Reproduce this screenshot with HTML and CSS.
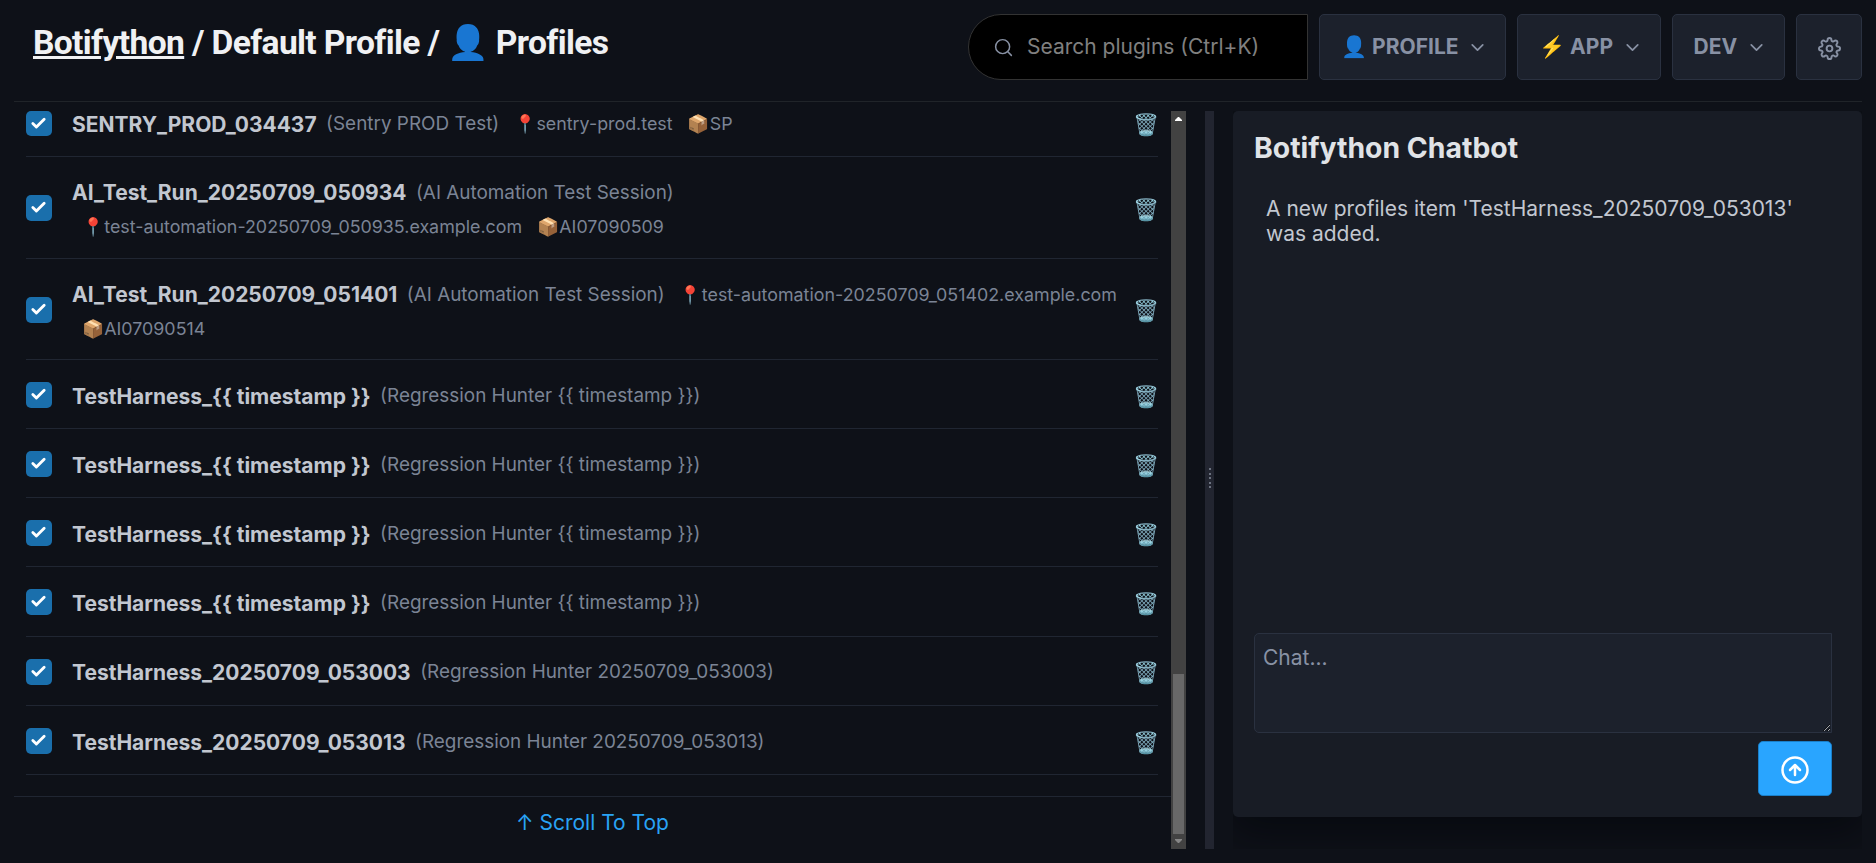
FILE: index.html
```html
<!DOCTYPE html>
<html lang="en">
<head>
<meta charset="utf-8">
<title>Botifython - Profiles</title>
<link rel="stylesheet" href="styles.css">
</head>
<body>
<header class="topbar">
  <h1 class="crumbs"><a class="home">Botifython</a> / Default Profile / 👤 Profiles</h1>
  <nav class="menu">
    <div class="search">
      <svg class="search-icon" viewBox="0 0 24 24"><circle cx="11" cy="11" r="8"/><path d="M21 21l-4.35-4.35"/></svg>
      <span>Search plugins (Ctrl+K)</span>
    </div>
    <div class="btn profile"><span>👤 PROFILE</span><svg class="chev" viewBox="0 0 24 24"><path d="M6 9l6 6 6-6"/></svg></div>
    <div class="btn app"><span>⚡ APP</span><svg class="chev" viewBox="0 0 24 24"><path d="M6 9l6 6 6-6"/></svg></div>
    <div class="btn dev"><span>DEV</span><svg class="chev" viewBox="0 0 24 24"><path d="M6 9l6 6 6-6"/></svg></div>
    <div class="btn gear">
      <svg class="gear-icon" viewBox="0 0 24 24"><circle cx="12" cy="12" r="3"/><path d="M19.4 15a1.65 1.65 0 0 0 .33 1.82l.06.06a2 2 0 0 1 0 2.83 2 2 0 0 1-2.83 0l-.06-.06a1.65 1.65 0 0 0-1.82-.33 1.65 1.65 0 0 0-1 1.51V21a2 2 0 0 1-2 2 2 2 0 0 1-2-2v-.09A1.65 1.65 0 0 0 9 19.4a1.65 1.65 0 0 0-1.82.33l-.06.06a2 2 0 0 1-2.83 0 2 2 0 0 1 0-2.83l.06-.06a1.65 1.65 0 0 0 .33-1.82 1.65 1.65 0 0 0-1.51-1H3a2 2 0 0 1-2-2 2 2 0 0 1 2-2h.09A1.65 1.65 0 0 0 4.6 9a1.65 1.65 0 0 0-.33-1.82l-.06-.06a2 2 0 0 1 0-2.83 2 2 0 0 1 2.83 0l.06.06a1.65 1.65 0 0 0 1.82.33H9a1.65 1.65 0 0 0 1-1.51V3a2 2 0 0 1 2-2 2 2 0 0 1 2 2v.09a1.65 1.65 0 0 0 1 1.51 1.65 1.65 0 0 0 1.82-.33l.06-.06a2 2 0 0 1 2.83 0 2 2 0 0 1 0 2.83l-.06.06a1.65 1.65 0 0 0-.33 1.82V9a1.65 1.65 0 0 0 1.51 1H21a2 2 0 0 1 2 2 2 2 0 0 1-2 2h-.09a1.65 1.65 0 0 0-1.51 1z"/></svg>
    </div>
  </nav>
</header>
<main class="content">
  <section class="left">
    <ul class="list">
      <li class="row first"><span class="check"><svg viewBox="0 0 24 24"><path d="M20 6L9 17l-5-5"/></svg></span><div class="info"><b>SENTRY_PROD_034437</b><span class="real">(Sentry PROD Test)</span><span class="tag">📍sentry-prod.test</span><span class="tag">📦SP</span></div><span class="trash">🗑️</span></li>
      <li class="row tall"><span class="check"><svg viewBox="0 0 24 24"><path d="M20 6L9 17l-5-5"/></svg></span><div class="info"><b>AI_Test_Run_20250709_050934</b><span class="real">(AI Automation Test Session)</span><br><span class="tag lead">📍test-automation-20250709_050935.example.com</span><span class="tag">📦AI07090509</span></div><span class="trash">🗑️</span></li>
      <li class="row tall"><span class="check"><svg viewBox="0 0 24 24"><path d="M20 6L9 17l-5-5"/></svg></span><div class="info"><b>AI_Test_Run_20250709_051401</b><span class="real">(AI Automation Test Session)</span><span class="tag">📍test-automation-20250709_051402.example.com</span><br><span class="tag lead">📦AI07090514</span></div><span class="trash">🗑️</span></li>
      <li class="row"><span class="check"><svg viewBox="0 0 24 24"><path d="M20 6L9 17l-5-5"/></svg></span><div class="info"><b>TestHarness_{{ timestamp }}</b><span class="real">(Regression Hunter {{ timestamp }})</span></div><span class="trash">🗑️</span></li>
      <li class="row"><span class="check"><svg viewBox="0 0 24 24"><path d="M20 6L9 17l-5-5"/></svg></span><div class="info"><b>TestHarness_{{ timestamp }}</b><span class="real">(Regression Hunter {{ timestamp }})</span></div><span class="trash">🗑️</span></li>
      <li class="row"><span class="check"><svg viewBox="0 0 24 24"><path d="M20 6L9 17l-5-5"/></svg></span><div class="info"><b>TestHarness_{{ timestamp }}</b><span class="real">(Regression Hunter {{ timestamp }})</span></div><span class="trash">🗑️</span></li>
      <li class="row"><span class="check"><svg viewBox="0 0 24 24"><path d="M20 6L9 17l-5-5"/></svg></span><div class="info"><b>TestHarness_{{ timestamp }}</b><span class="real">(Regression Hunter {{ timestamp }})</span></div><span class="trash">🗑️</span></li>
      <li class="row"><span class="check"><svg viewBox="0 0 24 24"><path d="M20 6L9 17l-5-5"/></svg></span><div class="info"><b>TestHarness_20250709_053003</b><span class="real">(Regression Hunter 20250709_053003)</span></div><span class="trash">🗑️</span></li>
      <li class="row"><span class="check"><svg viewBox="0 0 24 24"><path d="M20 6L9 17l-5-5"/></svg></span><div class="info"><b>TestHarness_20250709_053013</b><span class="real">(Regression Hunter 20250709_053013)</span></div><span class="trash">🗑️</span></li>
    </ul>
    <footer class="to-top"><a>↑ Scroll To Top</a></footer>
  </section>
  <div class="scrollbar">
    <svg class="up" viewBox="0 0 7 4"><path d="M3 0h1l3 3v1H0V3z"/></svg>
    <div class="thumb"></div>
    <svg class="down" viewBox="0 0 7 4"><path d="M0 0h7v1L4 4H3L0 1z"/></svg>
  </div>
  <div class="divider"><i></i><i></i><i></i><i></i><i></i></div>
  <aside class="chat-wrap">
    <div class="chat">
      <h2 class="chat-title">Botifython Chatbot</h2>
      <p class="message">A new profiles item 'TestHarness_20250709_053013' was added.</p>
      <textarea class="chat-input" placeholder="Chat..."></textarea>
      <div class="send"><svg viewBox="0 0 24 24"><circle cx="12" cy="12" r="10"/><path d="M16 12l-4-4-4 4M12 16V8"/></svg></div>
    </div>
  </aside>
</main>
</body>
</html>
```
FILE: styles.css
```css
* { box-sizing: border-box; }
body {
  margin: 0;
  width: 1876px;
  height: 863px;
  overflow: hidden;
  padding: 14px 14px 0;
  background: #0e1118;
  color: #c2c7d0;
  font: 21px/31.5px Inter, "Noto Color Emoji", sans-serif;
}
h1, h2, p, ul { margin: 0; padding: 0; }

.topbar {
  display: flex;
  justify-content: space-between;
  height: 88px;
  border-bottom: 1px solid #202429;
}
.crumbs {
  padding: 9px 0 0 19px;
  font-family: Roboto, "Noto Color Emoji", sans-serif;
  font-size: 33.6px;
  letter-spacing: -0.63px;
  line-height: 40px;
  font-weight: 700;
  color: #f0f1f3;
  white-space: nowrap;
}
.home { text-decoration: underline; }
.menu { display: flex; gap: 11px; height: 66px; }
.search {
  display: flex;
  align-items: center;
  width: 340px;
  padding-left: 24px;
  gap: 13px;
  border: 1px solid #333;
  border-radius: 33px 0 0 33px;
  background: #000;
  color: #808080;
}
.search-icon { width: 21px; height: 21px; fill: none; stroke: #8891a4; stroke-width: 1.7; stroke-linecap: round; }
.btn {
  display: flex;
  align-items: center;
  border: 1px solid #2a3140;
  border-radius: 5px;
  background: #1c212c;
  color: #8891a4;
  font-weight: 700;
  padding-left: 21px;
  justify-content: space-between;
  padding-right: 17px;
}
.profile { width: 187px; }
.app { width: 144px; }
.dev { width: 113px; padding-left: 20.5px; }
.gear { width: 66px; padding: 0; justify-content: center; }
.chev { width: 21px; height: 21px; fill: none; stroke: #8891a4; stroke-width: 2; stroke-linecap: round; stroke-linejoin: round; }
.gear-icon { width: 23px; height: 23px; margin-top: 2px; fill: none; stroke: #8891a4; stroke-width: 2; }

.content { display: flex; height: 738px; margin-top: 9px; }
.left { width: 1157px; display: flex; flex-direction: column; }
.list { list-style: none; padding: 0 13px 0 12px; }
.row {
  display: flex;
  align-items: center;
  height: 69.17px;
  padding-top: 2px;
  border-bottom: 1px solid #202632;
}
.row.first { height: 46.3px; padding-top: 0; align-items: flex-start; }
.row.first .check { height: 25px; }
.row.first .info { margin-top: -3px; padding-top: 0; }
.row.first .trash { margin: -5px 0 0; }
.row.tall { height: 101.3px; }
.row.tall .info { padding-top: 4px; line-height: 34px; }
.check {
  width: 26px;
  height: 26px;
  margin-right: 20px;
  border-radius: 5px;
  background: #1a6fac;
  display: flex;
  align-items: center;
  justify-content: center;
}
.check svg { width: 17px; height: 17px; margin: 0 1px 1px 0; fill: none; stroke: #fff; stroke-width: 4; stroke-linecap: round; stroke-linejoin: round; }
.info { flex: 1; padding-top: 3px; white-space: nowrap; line-height: 33.5px; }
.info b { font-weight: 700; color: #c2c7d0; }
.real, .tag { line-height: 1; vertical-align: 2px; color: #7b8495; }
.tall .real, .tall .tag { vertical-align: 1px; }
.real { margin-left: 9.5px; font-size: 18.9px; }
.tag { margin-left: 15px; font-size: 17.85px; }
.tag.lead { margin-left: 10px; }
.trash { width: 23px; padding-top: 3px; font-size: 21px; display: flex; justify-content: center; }

.to-top {
  margin-top: 21px;
  padding-top: 10px;
  border-top: 1px solid #202632;
  text-align: center;
  color: #29a3f5;
}

.scrollbar {
  width: 15px;
  background: #424242;
  display: flex;
  flex-direction: column;
  align-items: center;
  padding: 6px 0;
}
.up, .down { width: 7px; height: 4px; }
.up { fill: #fff; }
.down { fill: #868686; margin-top: 5px; }
.thumb { width: 11px; height: 160px; margin-top: 553px; background: #686868; }

.divider {
  width: 9px;
  margin-left: 19px;
  padding-bottom: 4px;
  background: #222530;
  display: flex;
  flex-direction: column;
  align-items: center;
  justify-content: center;
  gap: 2.5px;
}
.divider i { width: 2px; height: 2px; background: #6c7280; }

.chat-wrap { width: 629px; margin-left: 19px; overflow: hidden; }
.chat {
  height: 706px;
  padding: 20px 30px 0 21px;
  border-radius: 5px;
  background: #181c25;
  box-shadow: 0 12px 40px rgba(2, 4, 8, .6);
  display: flex;
  flex-direction: column;
}
.chat-title { font-size: 28.35px; line-height: 34px; font-weight: 700; color: #e0e3e7; }
.message { margin-top: 31px; padding: 0 12px; line-height: 25.2px; width: 565px; }
.chat-input {
  margin-top: auto;
  height: 100px;
  border: 1px solid #2a3140;
  border-radius: 5px 0 0 5px;
  background: #1c212c;
  padding: 8px;
  font: inherit;
  resize: vertical;
  outline: 0;
}
.chat-input::placeholder { color: #8891a4; opacity: 1; }
.send {
  width: 74px;
  height: 55px;
  margin: 8px 0 21px auto;
  padding-top: 2px;
  border: 1px solid #1a7fc9;
  border-radius: 5px;
  background: #29a5ff;
  display: flex;
  align-items: center;
  justify-content: center;
}
.send svg { width: 30px; height: 30px; fill: none; stroke: #fff; stroke-width: 2; stroke-linecap: round; stroke-linejoin: round; }
```
